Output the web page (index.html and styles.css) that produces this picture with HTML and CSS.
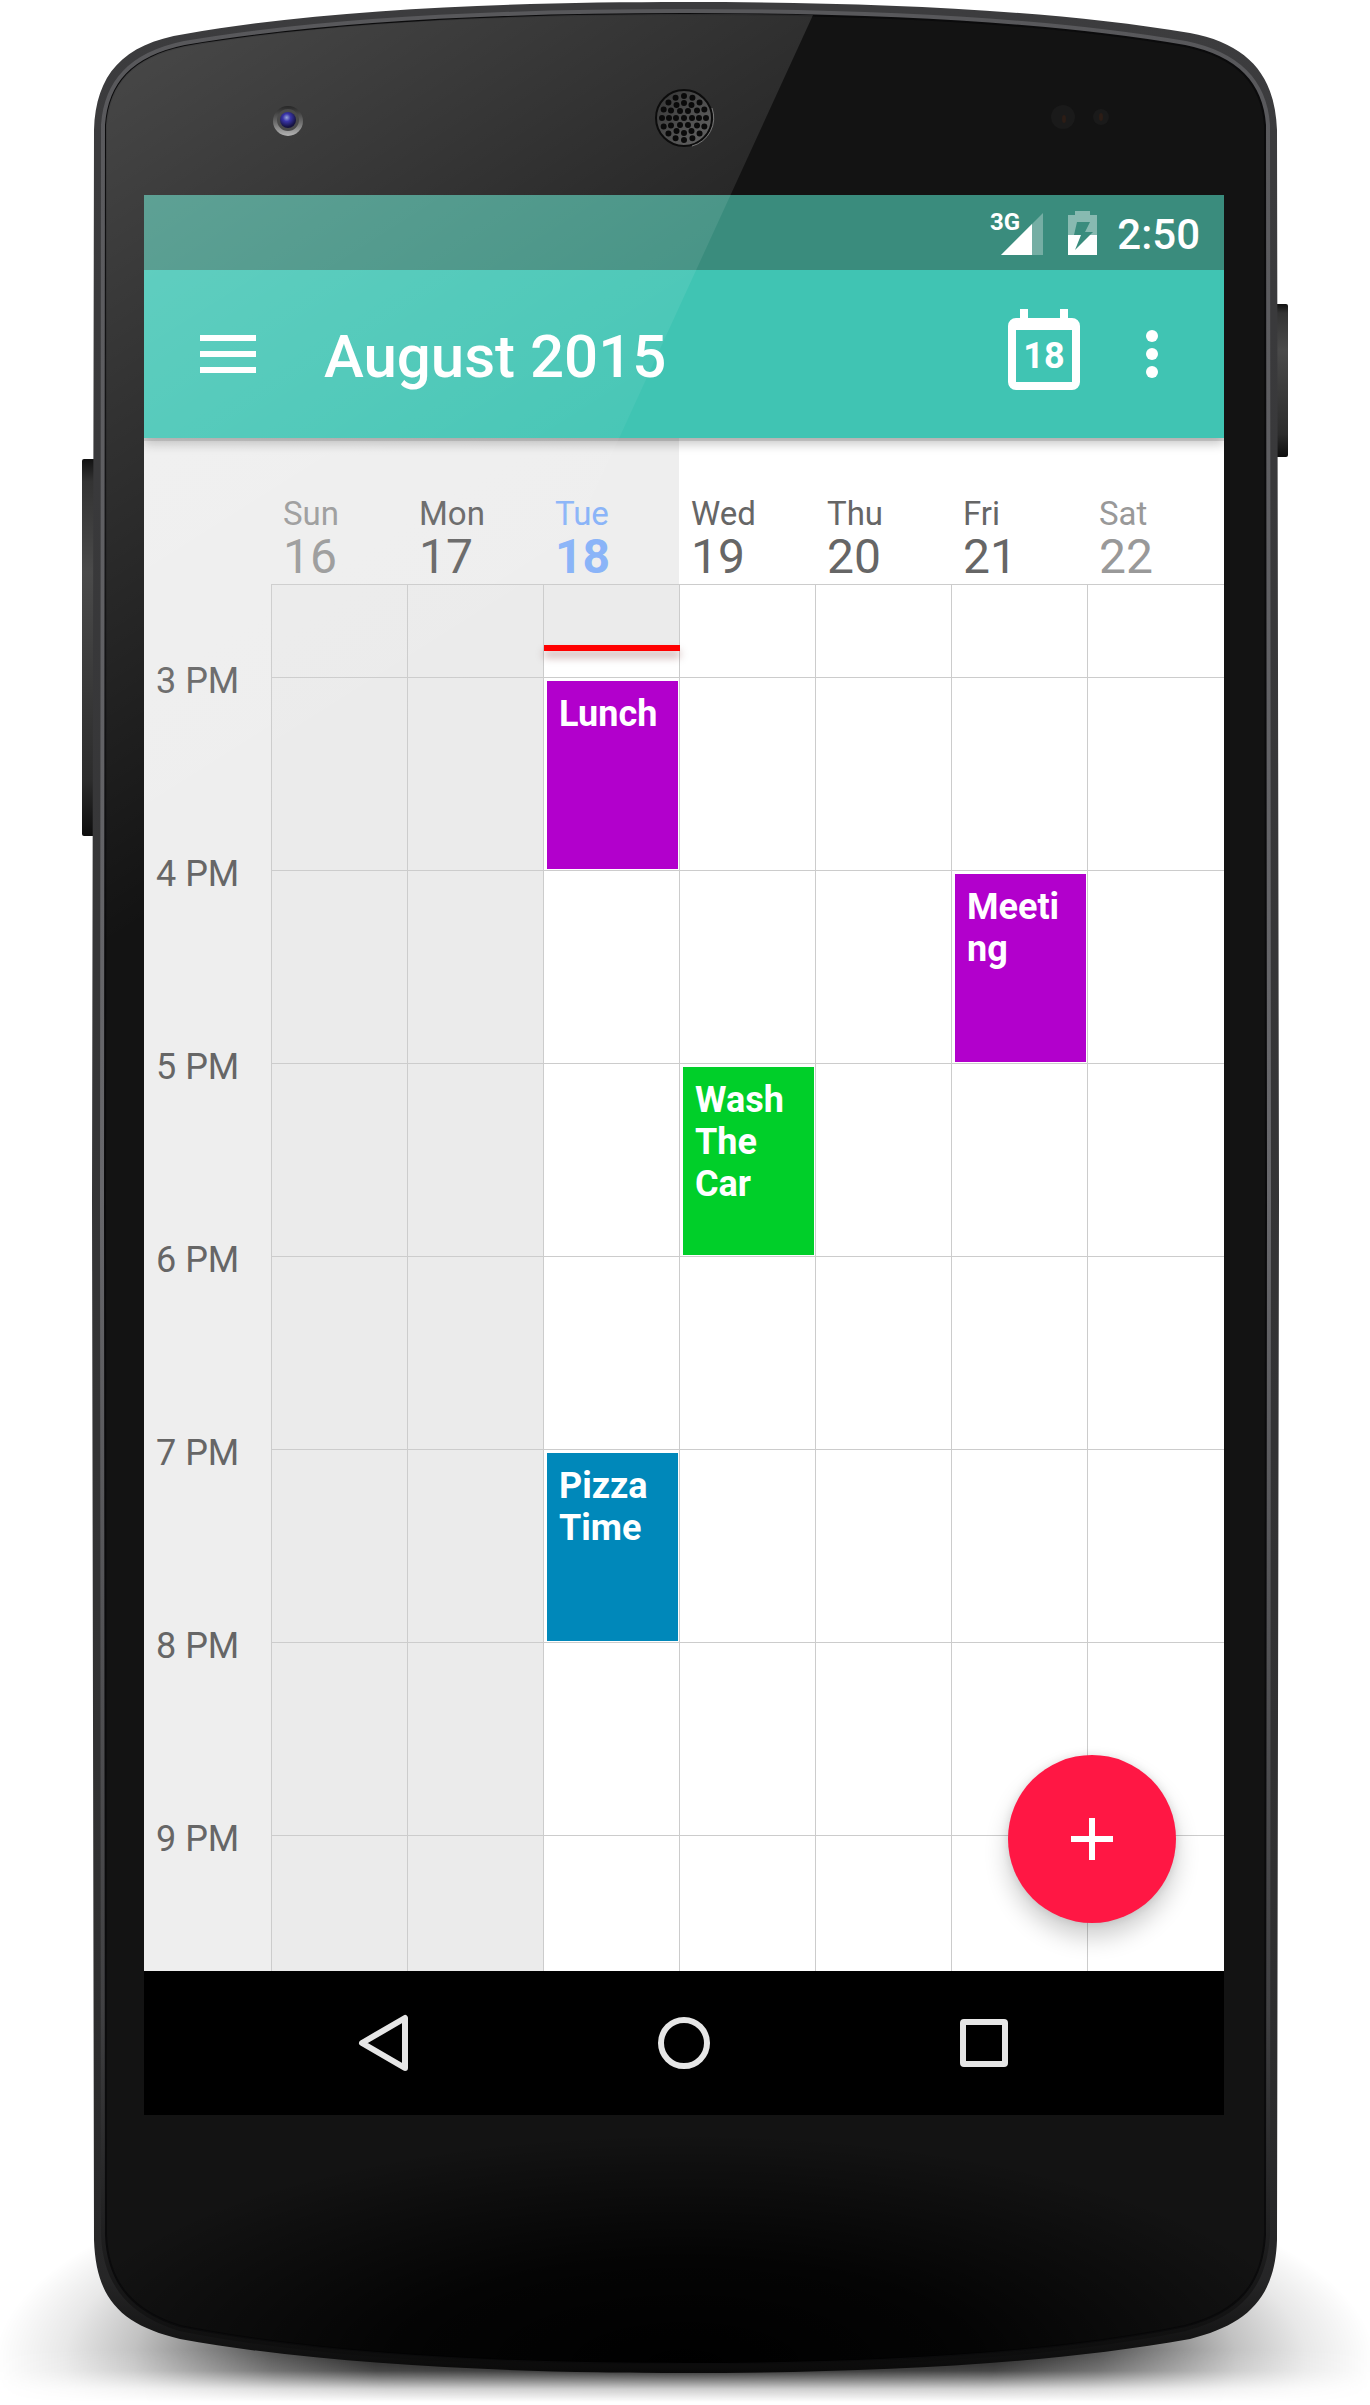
FILE: index.html
```html
<!DOCTYPE html>
<html lang="en">
<head>
<meta charset="utf-8">
<meta name="viewport" content="width=device-width, initial-scale=1">
<title>August 2015</title>
<link rel="stylesheet" href="styles.css">
</head>
<body>
<div class="phone">
  <svg class="phone-body" viewBox="0 0 1370 2405" preserveAspectRatio="none" aria-hidden="true">
    <defs>
      <radialGradient id="floor" gradientUnits="userSpaceOnUse" cx="0" cy="0" r="1" gradientTransform="translate(685 2362) scale(690 230)">
        <stop offset="0" stop-color="#000"/>
        <stop offset=".45" stop-color="#000" stop-opacity=".9"/>
        <stop offset=".6" stop-color="#000" stop-opacity=".68"/>
        <stop offset=".72" stop-color="#000" stop-opacity=".42"/>
        <stop offset=".8" stop-color="#000" stop-opacity=".24"/>
        <stop offset=".9" stop-color="#000" stop-opacity=".09"/>
        <stop offset="1" stop-color="#000" stop-opacity="0"/>
      </radialGradient>
      <linearGradient id="floorFade" gradientUnits="userSpaceOnUse" x1="0" y1="2350" x2="0" y2="2402">
        <stop offset="0" stop-color="#fff"/>
        <stop offset=".4" stop-color="#ccc"/>
        <stop offset=".75" stop-color="#333"/>
        <stop offset="1" stop-color="#000"/>
      </linearGradient>
      <mask id="floorMask" maskUnits="userSpaceOnUse" x="0" y="2100" width="1370" height="305">
        <rect x="0" y="2100" width="1370" height="305" fill="url(#floorFade)"/>
      </mask>
      <linearGradient id="rim" x1="0" y1="0" x2="0" y2="1">
        <stop offset="0" stop-color="#3c3c3e"/>
        <stop offset=".8" stop-color="#303031"/>
        <stop offset=".96" stop-color="#262627"/>
        <stop offset="1" stop-color="#0a0a0a"/>
      </linearGradient>
      <linearGradient id="rimLight" x1="0" y1="0" x2="0" y2="1">
        <stop offset="0" stop-color="#58585b"/>
        <stop offset=".5" stop-color="#68686c"/>
        <stop offset=".85" stop-color="#414143"/>
        <stop offset="1" stop-color="#0c0c0c"/>
      </linearGradient>
      <radialGradient id="chin" gradientUnits="userSpaceOnUse" cx="0" cy="0" r="1" gradientTransform="translate(685 2363) scale(640 230)">
        <stop offset="0" stop-color="#000"/>
        <stop offset=".45" stop-color="#000" stop-opacity=".8"/>
        <stop offset="1" stop-color="#000" stop-opacity="0"/>
      </radialGradient>
      <linearGradient id="key" x1="0" y1="0" x2="0" y2="1">
        <stop offset="0" stop-color="#111"/>
        <stop offset=".06" stop-color="#333"/>
        <stop offset=".3" stop-color="#4a4a4a"/>
        <stop offset=".85" stop-color="#2c2c2c"/>
        <stop offset="1" stop-color="#0d0d0d"/>
      </linearGradient>
    </defs>
    <rect x="0" y="2100" width="1370" height="305" fill="url(#floor)" mask="url(#floorMask)"/>
    <rect x="82" y="459" width="14" height="377" rx="2" fill="url(#key)"/>
    <rect x="1274" y="304" width="14" height="153" rx="2" fill="url(#key)"/>
    <path fill="url(#rim)" d="M92 1200L94 130C96 75 122 44 185 34C330 8 520 2 685 2C850 2 1040 8 1190 33C1248 44 1275 75 1277 130L1279 1200L1277 2240C1275 2300 1245 2325 1190 2339C1040 2366 850 2373 685 2373C520 2373 330 2366 180 2339C122 2325 96 2300 94 2240Z"/>
    <path fill="#131313" stroke="url(#rimLight)" stroke-width="10" d="M105 1200L106 125C109 84 132 57 185 46C330 21 520 14 685 14C850 14 1040 21 1185 46C1238 57 1262 84 1265 125L1266 1200L1265 2235C1262 2285 1238 2312 1185 2326C1040 2356 850 2363 685 2363C520 2363 330 2356 180 2326C135 2312 108 2285 106 2235Z"/>
    <path fill="#131313" stroke="#0b0b0c" stroke-width="2" d="M105 1200L106 125C109 84 132 57 185 46C330 21 520 14 685 14C850 14 1040 21 1185 46C1238 57 1262 84 1265 125L1266 1200L1265 2235C1262 2285 1238 2312 1185 2326C1040 2356 850 2363 685 2363C520 2363 330 2356 180 2326C135 2312 108 2285 106 2235Z"/>
    <path fill="url(#chin)" d="M106 2120H1265V2235C1262 2285 1238 2312 1185 2326C1040 2356 850 2363 685 2363C520 2363 330 2356 180 2326C135 2312 108 2285 106 2235Z"/>
  </svg>

  <main class="screen">
    <div class="status-bar">
      <svg class="signal" width="53" height="60" viewBox="0 -8 53 60" role="img" aria-label="3G signal">
        <text x="0" y="19" class="signal-label">3G</text>
        <path d="M11 44L53 2V44Z" fill="#fff" fill-opacity=".3"/>
        <path d="M11 44L42 13V44Z" fill="#fff"/>
      </svg>
      <svg class="battery" width="29" height="44" viewBox="0 0 29 44" role="img" aria-label="Battery charging">
        <path d="M7 0H22V4H29V24H0V4H7Z" fill="#fff" fill-opacity=".4"/>
        <path d="M0 24H29V44H0Z" fill="#fff"/>
        <path d="M9 11H22L17 21H25L7 39L13 24H6Z" fill="#3a8c7d"/>
      </svg>
      <time class="clock" datetime="14:50">2:50</time>
    </div>

    <header class="toolbar">
      <button class="icon-button" type="button" aria-label="Open menu">
        <svg width="56" height="38" viewBox="0 0 56 38"><path fill="#fff" d="M0 0H56V6H0ZM0 16H56V22H0ZM0 32H56V38H0Z"/></svg>
      </button>
      <h1 class="title">August 2015</h1>
      <button class="icon-button" type="button" aria-label="Go to today">
        <svg width="72" height="90" viewBox="0 0 72 90">
          <path fill="#fff" fill-rule="evenodd" d="M12 0H20V9H52V0H60V9H64A8 8 0 0 1 72 17V73A8 8 0 0 1 64 81H8A8 8 0 0 1 0 73V17A8 8 0 0 1 8 9H12ZM8 21V73H64V21Z"/>
          <text class="today-label" x="36" y="59" text-anchor="middle">18</text>
        </svg>
      </button>
      <button class="icon-button icon-button-more" type="button" aria-label="More options">
        <svg width="12" height="48" viewBox="0 0 12 48" fill="#fff"><circle cx="6" cy="6" r="6"/><circle cx="6" cy="24" r="6"/><circle cx="6" cy="42" r="6"/></svg>
      </button>
    </header>

    <section class="calendar">
      <table class="week">
        <colgroup><col class="hours-col"><col class="day-col" span="6"><col></colgroup>
        <thead>
          <tr>
            <td class="past"></td>
            <th scope="col" class="past weekend"><span class="day-name">Sun</span><span class="day-number">16</span></th>
            <th scope="col" class="past"><span class="day-name">Mon</span><span class="day-number">17</span></th>
            <th scope="col" class="past today"><span class="day-name">Tue</span><span class="day-number">18</span></th>
            <th scope="col"><span class="day-name">Wed</span><span class="day-number">19</span></th>
            <th scope="col"><span class="day-name">Thu</span><span class="day-number">20</span></th>
            <th scope="col"><span class="day-name">Fri</span><span class="day-number">21</span></th>
            <th scope="col" class="weekend"><span class="day-name">Sat</span><span class="day-number">22</span></th>
          </tr>
        </thead>
        <tbody>
          <tr class="row-first"><th></th><td class="past"></td><td class="past"></td><td class="current"><div class="now-line"></div></td><td></td><td></td><td></td><td></td></tr>
          <tr><th scope="row"><span class="hour">3 PM</span></th><td class="past"></td><td class="past"></td><td><a class="event purple" href="#lunch">Lunch</a></td><td></td><td></td><td></td><td></td></tr>
          <tr><th scope="row"><span class="hour">4 PM</span></th><td class="past"></td><td class="past"></td><td></td><td></td><td></td><td><a class="event purple" href="#meeting">Meeting</a></td><td></td></tr>
          <tr><th scope="row"><span class="hour">5 PM</span></th><td class="past"></td><td class="past"></td><td></td><td><a class="event green" href="#wash">Wash The Car</a></td><td></td><td></td><td></td></tr>
          <tr><th scope="row"><span class="hour">6 PM</span></th><td class="past"></td><td class="past"></td><td></td><td></td><td></td><td></td><td></td></tr>
          <tr><th scope="row"><span class="hour">7 PM</span></th><td class="past"></td><td class="past"></td><td><a class="event blue" href="#pizza">Pizza Time</a></td><td></td><td></td><td></td><td></td></tr>
          <tr><th scope="row"><span class="hour">8 PM</span></th><td class="past"></td><td class="past"></td><td></td><td></td><td></td><td></td><td></td></tr>
          <tr class="row-last"><th scope="row"><span class="hour">9 PM</span></th><td class="past"></td><td class="past"></td><td></td><td></td><td></td><td></td><td></td></tr>
        </tbody>
      </table>
      <button class="fab" type="button" aria-label="Add event">
        <svg width="42" height="42" viewBox="0 0 42 42"><path fill="#fff" d="M18 0H24V18H42V24H24V42H18V24H0V18H18Z"/></svg>
      </button>
    </section>

    <nav class="nav-bar" aria-label="System navigation">
      <button class="nav-button" type="button" aria-label="Back">
        <svg width="60" height="60" viewBox="0 0 60 60"><path d="M8 30L51 5V55Z"/></svg>
      </button>
      <button class="nav-button" type="button" aria-label="Home">
        <svg width="60" height="60" viewBox="0 0 60 60"><circle cx="30" cy="30" r="23"/></svg>
      </button>
      <button class="nav-button" type="button" aria-label="Recent apps">
        <svg width="60" height="60" viewBox="0 0 60 60"><rect x="9" y="9" width="42" height="42" rx="1"/></svg>
      </button>
    </nav>
  </main>

  <svg class="phone-glare" viewBox="0 0 1370 2405" preserveAspectRatio="none" aria-hidden="true">
    <defs>
      <linearGradient id="glare" gradientUnits="userSpaceOnUse" x1="150" y1="40" x2="547" y2="668">
        <stop offset="0" stop-color="#fff" stop-opacity=".22"/>
        <stop offset="1" stop-color="#fff" stop-opacity="0"/>
      </linearGradient>
      <radialGradient id="lens" cx=".42" cy=".35" r=".6">
        <stop offset="0" stop-color="#9aa7d8"/>
        <stop offset=".4" stop-color="#3a35a8"/>
        <stop offset="1" stop-color="#15133f"/>
      </radialGradient>
      <linearGradient id="lensRing" x1="0" y1="0" x2="0" y2="1">
        <stop offset="0" stop-color="#262626"/>
        <stop offset=".5" stop-color="#666"/>
        <stop offset="1" stop-color="#b4b4b4"/>
      </linearGradient>
      <linearGradient id="speaker" x1="0" y1="0" x2="1" y2="1">
        <stop offset="0" stop-color="#333"/>
        <stop offset="1" stop-color="#666"/>
      </linearGradient>
    </defs>
    <path fill="url(#glare)" d="M813 15C770 14 730 14 685 14C520 14 330 21 185 46C132 57 109 84 106 125L105 1200H270Z"/>
    <circle cx="288" cy="121" r="15" fill="url(#lensRing)"/>
    <circle cx="288" cy="120" r="11" fill="#4a4a4a"/>
    <circle cx="288" cy="120" r="8" fill="url(#lens)"/>
    <circle cx="684" cy="118" r="28" fill="url(#speaker)" stroke="#0c0c0c" stroke-width="2"/>
    <path d="M692 146A29 29 0 0 0 712 108" fill="none" stroke="#777" stroke-width="1"/>
    <g fill="none" stroke="#0a0a0a" stroke-width="6" stroke-linecap="round">
      <circle cx="684" cy="118" r="8" pathLength="6" stroke-dasharray="0 1"/>
      <circle cx="684" cy="118" r="15" pathLength="12" stroke-dasharray="0 1"/>
      <circle cx="684" cy="118" r="22" pathLength="16" stroke-dasharray="0 1"/>
    </g>
    <circle cx="684" cy="118" r="3" fill="#0a0a0a"/>
    <circle cx="1063" cy="117" r="12" fill="#1a1a1a"/>
    <circle cx="1101" cy="117" r="8" fill="#1a1a1a"/>
    <ellipse cx="1064" cy="119" rx="2" ry="4" fill="#2c1d16"/>
    <ellipse cx="1101" cy="117" rx="2" ry="4" fill="#2c1d16"/>
  </svg>
</div>
</body>
</html>
```
FILE: styles.css
```css
* {
  box-sizing: border-box;
}

body {
  margin: 0;
  background: #fff;
  font-family: Roboto, "Liberation Sans", sans-serif;
}

button {
  padding: 0;
  border: 0;
  background: none;
  cursor: pointer;
}

svg {
  display: block;
}

/* Phone */
.phone {
  position: relative;
  padding: 195px 146px 290px 144px;
}

.phone-body,
.phone-glare {
  position: absolute;
  inset: 0;
  width: 100%;
  height: 100%;
}

.phone-glare {
  z-index: 3;
  pointer-events: none;
}

.screen {
  position: relative;
  background: #fff;
}

/* Status bar */
.status-bar {
  display: flex;
  align-items: center;
  justify-content: flex-end;
  height: 75px;
  padding-right: 24px;
  background: #3a8c7d;
  color: #fff;
}

.battery {
  margin: 0 20px 0 25px;
}

.signal-label {
  fill: #fff;
  font-size: 24px;
  font-weight: 700;
}

.clock {
  padding-top: 4px;
  font-size: 42px;
  font-weight: 500;
}

/* Toolbar */
.toolbar {
  position: relative;
  z-index: 1;
  display: flex;
  align-items: center;
  height: 168px;
  padding: 0 66px 0 56px;
  background: #40c4b3;
  box-shadow: 0 3px 0 rgba(0, 0, 0, .12), 0 6px 10px rgba(0, 0, 0, .22);
  clip-path: inset(0 0 -24px 0);
}

.title {
  flex: 1;
  margin: 0;
  padding: 4px 0 0 68px;
  color: #fff;
  font-size: 60px;
  font-weight: 500;
}

.icon-button-more {
  margin-left: 66px;
}

.today-label {
  fill: #fff;
  font-family: Roboto, "Liberation Sans", sans-serif;
  font-size: 36px;
  font-weight: 700;
}

/* Week table */
.calendar {
  position: relative;
}

.week {
  width: 100%;
  table-layout: fixed;
  border-collapse: separate;
  border-spacing: 0;
}

.hours-col {
  width: 127px;
}

.day-col {
  width: 136px;
}

.week th,
.week td {
  padding: 0;
  color: #666;
  font-weight: 400;
  text-align: left;
  vertical-align: top;
}

.week thead th,
.week thead td {
  height: 146px;
  padding: 0 0 3px 12px;
  vertical-align: bottom;
}

.week thead .past {
  background: #eee;
}

.week .weekend {
  color: #999;
}

.week .today {
  color: #8ab4f8;
}

.day-name,
.day-number {
  display: block;
}

.day-name {
  font-size: 33px;
  line-height: 38px;
}

.day-number {
  font-size: 48px;
  line-height: 48px;
}

.today .day-number {
  font-weight: 700;
}

.week tbody th {
  padding-left: 12px;
  background: #eee;
}

.week tbody td {
  height: 193px;
  border-top: 1px solid #ccc;
  border-left: 1px solid #ccc;
}

.week tbody .row-first td {
  height: 93px;
}

.week tbody .row-last td {
  height: 136px;
}

.week tbody .past {
  background: #ebebeb;
}

.week tbody .current {
  position: relative;
  background: linear-gradient(#ebebeb 63px, #fff 63px);
}

.hour {
  display: block;
  margin-top: -17px;
  font-size: 36px;
  line-height: 42px;
}

.now-line {
  position: absolute;
  z-index: 1;
  top: 60px;
  left: 0;
  right: -1px;
  height: 6px;
  background: #f00;
  box-shadow: 0 6px 9px rgba(90, 0, 0, .35);
}

.event {
  display: block;
  height: 188px;
  margin: 3px 1px 1px 3px;
  padding: 12px;
  color: #fff;
  font-size: 36px;
  font-weight: 700;
  line-height: 42px;
  text-decoration: none;
  overflow-wrap: anywhere;
}

.purple {
  background: #b200cc;
}

.green {
  background: #00cf29;
}

.blue {
  background: #0088ba;
}

.fab {
  position: absolute;
  right: 48px;
  bottom: 48px;
  display: grid;
  place-items: center;
  width: 168px;
  height: 168px;
  border-radius: 50%;
  background: #ff1744;
  box-shadow: 0 14px 24px rgba(0, 0, 0, .2), 0 0 8px rgba(0, 0, 0, .1);
}

/* System navigation */
.nav-bar {
  display: flex;
  justify-content: center;
  height: 144px;
  background: #000;
}

.nav-button {
  display: grid;
  flex: 0 1 300px;
  place-items: center;
  fill: none;
  stroke: #e6e6e6;
  stroke-width: 6px;
  stroke-linejoin: round;
}
```
